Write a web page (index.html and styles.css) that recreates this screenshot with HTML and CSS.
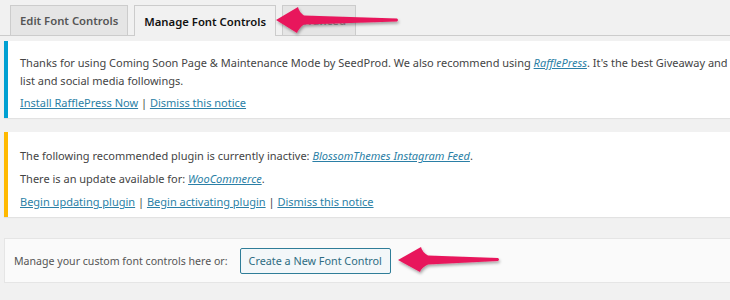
FILE: index.html
```html
<!DOCTYPE html>
<html>
<head>
<meta charset="utf-8">
<link rel="stylesheet" href="styles.css">
</head>
<body>
<div class="page">
  <div class="tabs">
    <a class="tab">Edit Font Controls</a>
    <a class="tab active">Manage Font Controls</a>
    <a class="tab faded">Advanced</a>
  </div>

  <div class="notice notice-info">
    <p>Thanks for using Coming Soon Page &amp; Maintenance Mode by SeedProd. We also recommend using <a class="em">RafflePress</a>. It's the best Giveaway and Contest plugin to grow your email<br>list and social media followings.</p>
    <p><a>Install RafflePress Now</a> | <a>Dismiss this notice</a></p>
  </div>

  <div class="notice notice-warning">
    <p>The following recommended plugin is currently inactive: <a class="em">BlossomThemes Instagram Feed</a>.</p>
    <p>There is an update available for: <a class="em">WooCommerce</a>.</p>
    <p><a>Begin updating plugin</a> | <a>Begin activating plugin</a> | <a>Dismiss this notice</a></p>
  </div>

  <div class="manage">
    <span class="manage-label">Manage your custom font controls here or:</span>
    <button class="btn">Create a New Font Control</button>
  </div>

  <div class="next"></div>
</div>

<svg class="arrows" width="730" height="300" viewBox="0 0 730 300">
  <defs>
    <filter id="sh" x="-20%" y="-50%" width="140%" height="200%">
      <feDropShadow dx="1" dy="2" stdDeviation="1.5" flood-color="#000" flood-opacity="0.35"/>
    </filter>
  </defs>
  <path filter="url(#sh)" fill="#e8195c" d="M276,20 L298,7 Q299,12 304,15.5 L397,18.5 Q399,20 397,21.5 L304,24.5 Q299,28 297,33 Z"/>
  <path filter="url(#sh)" fill="#e8195c" d="M398,260 L421,247 Q422,252 428,255.5 L498,258 Q500,259.5 498,261 L428,264.5 Q422,267 420,272 Z"/>
</svg>
</body>
</html>
```

FILE: styles.css
```css
html, body {
  margin: 0;
  padding: 0;
}
body {
  background: #f1f1f1;
  font-family: "Noto Sans", "Open Sans", sans-serif;
  color: #444;
  width: 730px;
  height: 300px;
  overflow: hidden;
  position: relative;
}
.page {
  width: 1000px;
}
.tabs {
  display: flex;
  gap: 6px;
  padding: 5px 0 0 10px;
  border-bottom: 1px solid #ccc;
  box-sizing: border-box;
  height: 36px;
}
.tab {
  display: flex;
  align-items: center;
  box-sizing: border-box;
  height: 30px;
  padding: 0 9px;
  border: 1px solid #ccc;
  border-bottom: none;
  background: #e5e5e5;
  color: #555;
  font-size: 11.3px;
  font-weight: 600;
}
.tab.active {
  background: #f1f1f1;
  color: #111;
  height: 31px;
  margin-bottom: -1px;
}
.tab.faded {
  color: #999;
}
.notice {
  background: #fff;
  margin: 5px 0 0 4px;
  padding: 9px 12px 2px 12px;
  border-left: 4px solid #00a0d2;
  box-shadow: 0 1px 1px rgba(0,0,0,.06);
  font-size: 11px;
  line-height: 18px;
}
.notice p {
  margin: 4px 0;
}
.notice-warning {
  border-left-color: #ffb900;
  margin-top: 14px;
  padding-top: 10px;
  padding-bottom: 1px;
}
.notice-warning p {
  margin: 5px 0;
}
.notice a {
  color: #2b7fa6;
  text-decoration: underline;
}
.notice a.em {
  font-style: italic;
}
.manage {
  display: flex;
  align-items: center;
  gap: 12px;
  margin: 21px 0 0 4px;
  height: 45px;
  box-sizing: border-box;
  padding: 0 9px;
  background: #fafafa;
  border: 1px solid #e5e5e5;
  font-size: 10.6px;
  color: #555;
}
.btn {
  font-family: inherit;
  font-size: 10.8px;
  color: #2e6c82;
  background: #f3f7f9;
  border: 1px solid #2f7d98;
  border-radius: 2px;
  height: 26px;
  padding: 0 8px;
}
.next {
  margin-top: 17px;
  border-top: 1px solid #e2e2e2;
  height: 5px;
}
.arrows {
  position: absolute;
  left: 0;
  top: 0;
  pointer-events: none;
}
```
